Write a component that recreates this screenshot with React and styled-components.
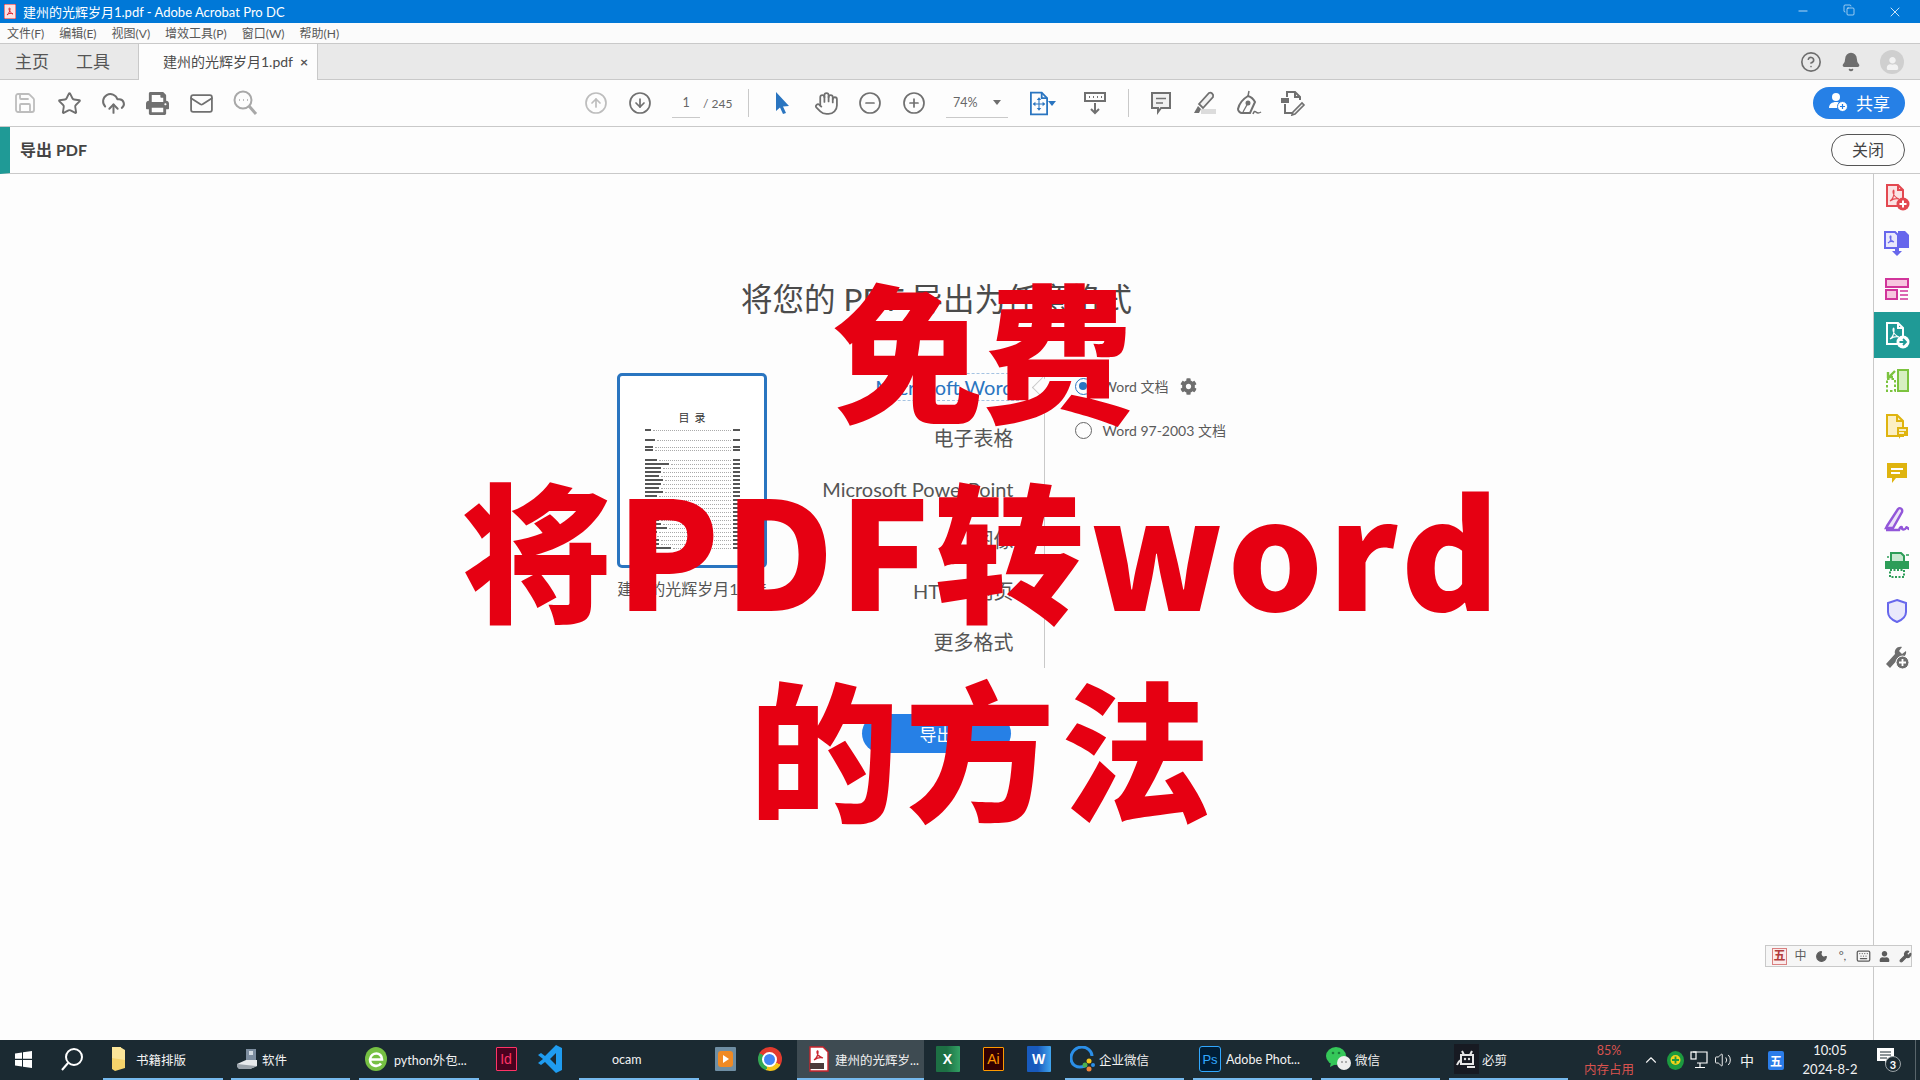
import React from "react";
import styled, { createGlobalStyle } from "styled-components";
import {
  Save, Star, CloudUpload, Mail, CircleArrowUp, CircleArrowDown, Hand,
  CircleMinus, CirclePlus, CircleHelp, Bell, ChevronUp, Volume2, Minus, X, Copy,
  Moon, Keyboard, Wrench,
} from "lucide-react";
import { FaCog, FaPrint, FaUser } from "react-icons/fa";

const UI_FONT = `Lato, "Noto Sans CJK SC", sans-serif`;

const GlobalStyle = createGlobalStyle`
  html, body { margin: 0; padding: 0; background: #fdfdfd; }
  body { font-family: ${UI_FONT}; overflow: hidden; }
  * { box-sizing: border-box; }
`;

const Page = styled.div`
  position: relative;
  display: flex;
  flex-direction: column;
  width: 1920px;
  height: 1080px;
  overflow: hidden;
  background: #fdfdfd;
  color: #4b4b4b;
`;

/* window chrome */
const TitleBar = styled.div`
  display: flex;
  align-items: center;
  height: 23px;
  padding-left: 4px;
  background: #0078d7;
  color: #fff;
  font-size: 13px;
`;
const TitleText = styled.span`
  margin-left: 7px;
  white-space: nowrap;
`;
const WindowControls = styled.div`
  display: flex;
  margin-left: auto;
  padding-right: 2px;
  color: #fff;
`;
const WindowButton = styled.span`
  display: flex;
  justify-content: center;
  width: 46px;
`;
const MenuBar = styled.div`
  display: flex;
  align-items: center;
  gap: 15px;
  height: 21px;
  padding: 0 0 2px 7px;
  border-bottom: 1px solid #c9c9c9;
  background: #fbfbfb;
  color: #585858;
  font-size: 12px;
  white-space: nowrap;
`;
const TabBar = styled.div`
  display: flex;
  align-items: stretch;
  height: 36px;
  border-bottom: 1px solid #c9c9c9;
  background: #e9e9e9;
`;
const NavTab = styled.span`
  display: flex;
  align-items: center;
  margin-left: ${(p) => p.$ml}px;
  padding-bottom: 2px;
  color: #555;
  font-size: 17px;
`;
const DocTab = styled.div`
  display: flex;
  align-items: center;
  width: 180px;
  height: 36px;
  margin-left: 28px;
  padding: 0 0 2px 24px;
  border: 1px solid #c9c9c9;
  border-width: 0 1px;
  background: #fdfdfd;
  color: #4b4b4b;
  font-size: 14px;
  white-space: nowrap;
`;
const TabClose = styled.span`
  margin-left: 7px;
  font-size: 14px;
  font-weight: 700;
  color: #555;
`;
const TabActions = styled.div`
  display: flex;
  align-items: center;
  gap: 19px;
  margin-left: auto;
  padding-right: 16px;
  color: #6e6e6e;
`;
const Avatar = styled.span`
  display: flex;
  align-items: flex-end;
  justify-content: center;
  width: 24px;
  height: 24px;
  padding-bottom: 4px;
  border-radius: 50%;
  background: #cfcfcf;
  color: #f2f2f2;
`;

/* main toolbar */
const Toolbar = styled.div`
  display: flex;
  align-items: center;
  height: 47px;
  padding-left: 3px;
  padding-right: 15px;
  border-bottom: 1px solid #c9c9c9;
  background: #fdfdfd;
`;
const ToolButton = styled.span`
  display: flex;
  align-items: center;
  justify-content: center;
  flex: none;
  width: 44px;
  height: 46px;
  margin-left: ${(p) => p.$ml || 0}px;
  color: ${(p) => p.$color || "#707070"};
`;
const ToolField = styled.span`
  display: flex;
  align-items: center;
  justify-content: ${(p) => (p.$spread ? "space-between" : "center")};
  flex: none;
  width: ${(p) => p.$w}px;
  height: 29px;
  margin-left: ${(p) => p.$ml}px;
  padding: 0 ${(p) => (p.$spread ? "7px" : "0")};
  border-bottom: 1px solid #c9c9c9;
  color: #666;
  font-size: 12.5px;
`;
const PageTotal = styled.span`
  flex: none;
  margin-left: 3px;
  width: 27px;
  color: #666;
  font-size: 12px;
  white-space: nowrap;
`;
const ToolDivider = styled.span`
  flex: none;
  width: 1px;
  height: 28px;
  margin-left: ${(p) => p.$ml}px;
  background: #c9c9c9;
`;
const Caret = styled.span`
  width: 0;
  height: 0;
  border: 4px solid transparent;
  border-top: 5px solid ${(p) => p.$color || "#6e6e6e"};
  border-bottom: 0;
`;
const ShareButton = styled.button`
  display: flex;
  align-items: center;
  justify-content: center;
  gap: 8px;
  width: 92px;
  height: 32px;
  margin-left: auto;
  padding: 0 0 2px;
  border: 0;
  border-radius: 16px;
  background: #2680e6;
  color: #fff;
  font-family: inherit;
  font-size: 17px;
`;

/* export header */
const ExportBar = styled.div`
  display: flex;
  align-items: center;
  height: 47px;
  padding-right: 15px;
  border-bottom: 1px solid #c9c9c9;
  border-left: 10px solid #1f9a96;
`;
const ExportTitle = styled.span`
  margin: 0 0 2px 10px;
  color: #444;
  font-size: 16px;
  font-weight: 700;
`;
const CloseButton = styled.button`
  width: 74px;
  height: 32px;
  margin-left: auto;
  padding: 0 0 2px;
  border: 1px solid #555;
  border-radius: 16px;
  background: #fdfdfd;
  color: #444;
  font-family: inherit;
  font-size: 16px;
`;

/* body */
const Body = styled.div`
  display: flex;
  flex: 1;
  min-height: 0;
`;
const Main = styled.main`
  display: flex;
  flex-direction: column;
  align-items: center;
  flex: 1;
  padding-top: 104px;
`;
const Heading = styled.h1`
  margin: 0;
  height: 42px;
  color: #4b4b4b;
  font-size: 31.5px;
  font-weight: 400;
  line-height: 42px;
  white-space: nowrap;
`;
const Exporter = styled.div`
  display: flex;
  width: 640px;
  margin-top: 42px;
`;
const ThumbColumn = styled.div`
  display: flex;
  flex-direction: column;
  align-items: center;
  flex: none;
  width: 150px;
  padding-top: 11px;
`;
const Thumb = styled.div`
  display: flex;
  flex-direction: column;
  align-items: stretch;
  width: 150px;
  height: 195px;
  padding: 34px 24px 0 25px;
  border: 3px solid #2a75c0;
  border-radius: 5px;
  background: #fff;
`;
const ThumbTitle = styled.div`
  margin-bottom: 3px;
  color: #333;
  font-size: 11px;
  line-height: 15px;
  text-align: center;
  word-spacing: 2px;
`;
const TocRow = styled.div`
  display: flex;
  align-items: center;
  gap: 2px;
  height: 2px;
  margin-top: ${(p) => p.$gap}px;
`;
const TocLabel = styled.span`
  flex: none;
  width: ${(p) => p.$w}px;
  height: 2px;
  background: #555;
`;
const TocDots = styled.span`
  flex: 1;
  border-bottom: 1px dotted #aaa;
`;
const ThumbCaption = styled.div`
  margin-top: 9px;
  color: #555;
  font-size: 16px;
  line-height: 24px;
  white-space: nowrap;
`;
const FormatList = styled.div`
  flex: none;
  width: 277px;
  padding-right: 30px;
`;
const FormatRow = styled.div`
  position: relative;
  display: flex;
  align-items: center;
  justify-content: flex-end;
  height: 51px;
  padding-bottom: 2px;
  color: ${(p) => (p.$active ? "#2a75c0" : "#555")};
  font-size: 20px;
  white-space: nowrap;
  ${(p) =>
    p.$active &&
    `
    &::after {
      content: "";
      position: absolute;
      right: -36px;
      top: 18px;
      width: 14px;
      height: 14px;
      transform: rotate(45deg);
      border-left: 1px solid #c9c9c9;
      border-bottom: 1px solid #c9c9c9;
      background: #fdfdfd;
    }
  `}
`;
const ActiveLabel = styled.span`
  padding: 0 5px 0 2px;
  margin-right: -5px;
  line-height: 26px;
  border-top: 1px dashed #a5c3e2;
  border-bottom: 1px dashed #a5c3e2;
`;
const OptionsColumn = styled.div`
  flex: 1;
  padding: 12px 0 0 30px;
  border-left: 1px solid #c9c9c9;
`;
const Option = styled.label`
  display: flex;
  align-items: center;
  height: 24px;
  margin-bottom: 20px;
  color: #5a5a5a;
  font-size: 14px;
  white-space: nowrap;
`;
const Radio = styled.span`
  display: flex;
  align-items: center;
  justify-content: center;
  flex: none;
  width: 17px;
  height: 17px;
  margin-right: 11px;
  border: 1.5px solid ${(p) => (p.$checked ? "#2a75c0" : "#666")};
  border-radius: 50%;
  background: #fdfdfd;
  &::after {
    content: "";
    display: ${(p) => (p.$checked ? "block" : "none")};
    width: 8px;
    height: 8px;
    border-radius: 50%;
    background: #2a75c0;
  }
`;
const GearWrap = styled.span`
  display: flex;
  margin-left: 12px;
  color: #6e6e6e;
`;
const ExportButton = styled.button`
  width: 149px;
  height: 39px;
  margin-top: 46px;
  border: 0;
  border-radius: 20px;
  background: #2680e6;
  color: #fff;
  font-family: inherit;
  font-size: 17px;
`;

/* right rail */
const Rail = styled.aside`
  flex: none;
  width: 47px;
  border-left: 1px solid #c9c9c9;
`;
const RailItem = styled.div`
  display: flex;
  align-items: center;
  justify-content: center;
  height: 46px;
  background: ${(p) => (p.$active ? "#1f9a96" : "transparent")};
`;

/* banner lying over the page */
const Banner = styled.div`
  position: absolute;
  top: 247px;
  left: 0;
  width: 1966px;
  color: #e60012;
  font-family: "Noto Sans CJK SC", "Noto Sans", sans-serif;
  font-size: 150px;
  font-weight: 900;
  text-align: center;
  pointer-events: none;
`;
const BannerLine = styled.div`
  height: 199px;
  line-height: 199px;
  letter-spacing: ${(p) => p.$spacing}px;
  white-space: nowrap;
`;

/* IME floating bar */
const ImeBar = styled.div`
  position: absolute;
  top: 945px;
  left: 1765px;
  display: flex;
  align-items: center;
  gap: 6px;
  width: 147px;
  height: 22px;
  padding-left: 6px;
  border: 1px solid #c9c9c9;
  background: #f6f6f6;
  color: #5c5c5c;
  font-size: 13px;
`;
const ImeGlyph = styled.span`
  display: flex;
  align-items: center;
  justify-content: center;
  flex: none;
  width: 15px;
  height: 17px;
  color: ${(p) => p.$color || "#5c5c5c"};
  font-size: 12px;
  font-weight: ${(p) => p.$weight || 400};
  line-height: 1;
  border: ${(p) => (p.$boxed ? "1px solid #d98080" : "0")};
  background: ${(p) => (p.$boxed ? "#fbeaea" : "transparent")};
`;

/* taskbar */
const Taskbar = styled.footer`
  display: flex;
  align-items: center;
  flex: none;
  height: 40px;
  background: #1b2a32;
  color: #f2f2f2;
  font-size: 12.5px;
`;
const TaskItem = styled.div`
  position: relative;
  display: flex;
  align-items: center;
  justify-content: ${(p) => (p.$center ? "center" : "flex-start")};
  gap: ${(p) => p.$gap || 6}px;
  flex: none;
  width: ${(p) => p.$w}px;
  height: 40px;
  margin-left: ${(p) => p.$ml || 0}px;
  padding-left: ${(p) => (p.$center ? 0 : p.$pl || 5)}px;
  padding-bottom: 2px;
  background: ${(p) => (p.$active ? "#3e4b52" : "transparent")};
  white-space: nowrap;
  ${(p) =>
    p.$open &&
    `
    &::after {
      content: "";
      position: absolute;
      left: 0;
      right: 0;
      bottom: 0;
      height: 2px;
      background: #76b9ed;
    }
  `}
`;
const AppTile = styled.span`
  display: flex;
  align-items: center;
  justify-content: center;
  flex: none;
  width: ${(p) => p.$w || 21}px;
  height: ${(p) => p.$h || 24}px;
  border: ${(p) => (p.$line ? `1px solid ${p.$line}` : "0")};
  border-radius: ${(p) => p.$r || 1}px;
  background: ${(p) => p.$bg};
  color: ${(p) => p.$fg};
  font-family: "Liberation Sans", "Noto Sans CJK SC", sans-serif;
  font-size: ${(p) => p.$size || 14}px;
  font-weight: ${(p) => p.$weight || 400};
`;
const ChromeBall = styled.span`
  display: flex;
  align-items: center;
  justify-content: center;
  width: 24px;
  height: 24px;
  border-radius: 50%;
  background: conic-gradient(#e33b2e 0 120deg, #f5c518 120deg 200deg, #34a853 200deg 300deg, #e33b2e 300deg);
  &::after {
    content: "";
    width: 11px;
    height: 11px;
    border: 2px solid #fff;
    border-radius: 50%;
    background: #4285f4;
  }
`;
const MemoryMeter = styled.div`
  flex: none;
  width: 60px;
  margin-left: 11px;
  color: #d9534f;
  font-size: 12.5px;
  line-height: 19px;
  text-align: center;
`;
const Tray = styled.span`
  display: flex;
  align-items: center;
  justify-content: center;
  flex: none;
  width: ${(p) => p.$w || 24}px;
  height: 40px;
  color: #f2f2f2;
  font-size: 14px;
`;
const Clock = styled.div`
  flex: none;
  width: 70px;
  margin-left: 2px;
  font-size: 13px;
  line-height: 19px;
  text-align: center;
`;
const NoticeBadge = styled.span`
  position: absolute;
  right: 0;
  bottom: -6px;
  display: flex;
  align-items: center;
  justify-content: center;
  width: 16px;
  height: 16px;
  border: 1px solid #9aa2a6;
  border-radius: 50%;
  background: #1b2a32;
  color: #fff;
  font-size: 11px;
  font-weight: 700;
`;
const Notice = styled.span`
  position: relative;
  display: flex;
  flex: none;
  width: 24px;
  margin-left: 12px;
  margin-top: -6px;
`;
const DesktopEdge = styled.span`
  flex: none;
  width: 1px;
  height: 40px;
  margin-left: auto;
  margin-right: 4px;
  background: #59656b;
`;

/* drawn icons */
const LensIcon = () => (
  <svg width="26" height="26" viewBox="0 0 26 26" fill="none" stroke="#a8a8a8" strokeWidth="2">
    <circle cx="11" cy="10" r="8.500" />
    <path d="M17 16l7 8" strokeWidth="3" />
    <path d="M7 10h1M11 10h1M15 10h1" strokeWidth="1.500" />
  </svg>
);
const CursorIcon = () => (
  <svg width="18" height="24" viewBox="0 0 18 24"><path d="M3 1l13 14-6 .6 3 6.400-3 1-3-6.500L3 20z" fill="#2a75c0" /></svg>
);
const FitIcon = () => (
  <svg width="18" height="25" viewBox="0 0 20 26" fill="none" stroke="#2a75c0" strokeWidth="2">
    <path d="M1 1h12l6 6v18H1z" /><path d="M13 1v6h6" />
    <path d="M10 8v11M4 13.500h12" strokeWidth="1.200" />
    <path d="M10 6l-2.500 3h5zM10 21l-2.500-3h5zM3 13.500l3-2.500v5zM17 13.500l-3-2.500v5z" fill="#2a75c0" stroke="none" />
  </svg>
);
const RulerIcon = () => (
  <svg width="24" height="24" viewBox="0 0 24 24" fill="none" stroke="#707070" strokeWidth="2">
    <rect x="2" y="2" width="20" height="8" />
    <path d="M6 6h1M10 6h1M14 6h1M18 6h1M12 12v10M8 18l4 4 4-4" />
  </svg>
);
const CommentIcon = () => (
  <svg width="22" height="24" viewBox="0 0 22 24" fill="none" stroke="#707070" strokeWidth="2">
    <path d="M2 2h18v15H11l-3 4v-4H2z" fill="#f0f0f0" /><path d="M6 7.500h10M6 12h7" strokeWidth="1.300" />
  </svg>
);
const HighlightIcon = () => (
  <svg width="24" height="24" viewBox="0 0 24 24" fill="none">
    <rect x="8" y="18" width="15" height="5" fill="#dcdcdc" />
    <path d="M6 13L16 2c2-1 5 1 4 4L10 17z" stroke="#707070" strokeWidth="1.800" fill="#f2f2f2" />
    <path d="M5 15l3 3-2 4H1z" fill="#707070" />
  </svg>
);
const SignIcon = () => (
  <svg width="26" height="27" viewBox="0 0 26 27" fill="none" stroke="#707070" strokeWidth="2">
    <path d="M13 1l-1 5" strokeWidth="1.500" />
    <path d="M12 6c4 1 6 4 7 6l-5 11H6C4 23 2 21 2 19c1-5 5-10 10-13z" />
    <path d="M12 13l-5 9" strokeWidth="1.300" />
    <circle cx="12" cy="13" r="1.500" fill="#707070" />
    <path d="M17 24c1-3 2-3 3-2s2 2 5 0" strokeWidth="1.500" />
  </svg>
);
const EditPageIcon = () => (
  <svg width="26" height="26" viewBox="0 0 26 26" fill="none" stroke="#707070" strokeWidth="2">
    <path d="M7 7V2h8l5 5v3" /><path d="M15 2v5h5" /><path d="M5 14v9h7" />
    <rect x="1" y="8" width="8" height="5" fill="#707070" stroke="none" />
    <path d="M13 22l9-9 2 2-9 9-3 1z" fill="#f0f0f0" strokeWidth="1.600" />
  </svg>
);
const ShareUserIcon = () => (
  <svg width="20" height="20" viewBox="0 0 20 20">
    <circle cx="8" cy="5" r="4" fill="#fff" /><path d="M1 16c0-4 3-6 7-6s5 2 5 6z" fill="#fff" />
    <circle cx="14.500" cy="14.500" r="5" fill="#fff" stroke="#2680e6" />
    <path d="M14.500 12v5M12 14.500h5" stroke="#2680e6" strokeWidth="1.200" />
  </svg>
);
const PdfMark = ({ color }) => (
  <path d="M6 18c3-2 4-6 4-9 0-3-1-2-1 0 0 3 3 6 6 7-3-1-6 0-9 2z" fill="none" stroke={color} strokeWidth="1.100" />
);
const PdfPage = ({ color, fill }) => (
  <>
    <path d="M3 2h11l5 5v16H3z" fill={fill} stroke={color} strokeWidth="2" />
    <path d="M14 2v5h5" fill="none" stroke={color} strokeWidth="2" />
    <PdfMark color={color} />
  </>
);
const railIcons = [
  <svg key="create" width="26" height="28" viewBox="0 0 26 28">
    <PdfPage color="#e34850" fill="#fbe3e4" /><circle cx="19" cy="21" r="6.500" fill="#e34850" />
    <path d="M19 17.500v7M15.500 21h7" stroke="#fff" strokeWidth="2" />
  </svg>,
  <svg key="combine" width="26" height="28" viewBox="0 0 26 28">
    <path d="M1 3h10l3 3v13H1z" fill="#e9e8fb" stroke="#6767ec" strokeWidth="2" />
    <path d="M14 2h7l4 4v13H14z" fill="#6767ec" />
    <path d="M11 18v4H8l5 5 5-5h-3v-4z" fill="#6767ec" />
    <path d="M4 14c2-1 3-4 3-6 0-2-1-1-1 0 0 2 2 4 4 5-2-1-4-1-6 1z" fill="none" stroke="#6767ec" strokeWidth="1.100" />
  </svg>,
  <svg key="organize" width="24" height="24" viewBox="0 0 24 24" fill="#f7c6df" stroke="#d1359b" strokeWidth="2">
    <rect x="1" y="2" width="22" height="8" /><rect x="1" y="13" width="11" height="9" />
    <path d="M15 14h8M15 18h8M15 22h8" strokeWidth="1.300" />
  </svg>,
  <svg key="export" width="26" height="28" viewBox="0 0 26 28">
    <path d="M3 2h11l5 5v16H3z" fill="none" stroke="#fff" strokeWidth="2" />
    <path d="M14 2v5h5" fill="none" stroke="#fff" strokeWidth="2" /><PdfMark color="#fff" />
    <circle cx="19" cy="21" r="6.500" fill="#fff" />
    <path d="M15.500 21h6M19 18l3 3-3 3" fill="none" stroke="#1f9a96" strokeWidth="1.800" />
  </svg>,
  <svg key="compress" width="24" height="24" viewBox="0 0 24 24" fill="none" stroke="#7cc33f" strokeWidth="2">
    <rect x="13" y="1" width="10" height="21" fill="#d8efc2" />
    <path d="M2 10h8v12H2z" strokeDasharray="2.500 2" />
    <path d="M10 2L5 7M3 3v5h5" strokeWidth="2.400" />
  </svg>,
  <svg key="notes" width="24" height="28" viewBox="0 0 24 28">
    <path d="M2 2h10l6 6v15H2z" fill="#fcefc2" stroke="#dfb40f" strokeWidth="2" />
    <path d="M12 2v6h6" fill="none" stroke="#dfb40f" strokeWidth="2" />
    <path d="M12 14h11v9h-7l-2 3v-3h-2z" fill="#dfb40f" />
    <path d="M14 17h7M14 20h5" stroke="#fff" strokeWidth="1.300" />
  </svg>,
  <svg key="comment" width="24" height="24" viewBox="0 0 24 24">
    <path d="M2 2h20v15H11l-4 5v-5H2z" fill="#dfb40f" />
    <path d="M6 8h12M6 12h9" stroke="#fff" strokeWidth="2" />
  </svg>,
  <svg key="sign" width="26" height="26" viewBox="0 0 26 26" fill="none" stroke="#9256d9" strokeWidth="2.400">
    <path d="M3 20L14 3c2-2 5 0 4 3L9 22H2z" fill="#ece2f8" />
    <path d="M2 24h13c1-3 3-4 3-2s3 2 4 0 2 1 3 1" />
  </svg>,
  <svg key="scan" width="26" height="26" viewBox="0 0 26 26">
    <path d="M7 1h10l3 3v7H7z" fill="#c7e8d0" stroke="#2d9d58" strokeWidth="2" />
    <rect x="1" y="9" width="24" height="8" fill="#2d9d58" />
    <path d="M6 18h14v7H6z" fill="none" stroke="#2d9d58" strokeWidth="2" strokeDasharray="2 1.500" />
    <path d="M3 5h2M22 3h3" stroke="#2d9d58" strokeWidth="1.500" />
  </svg>,
  <svg key="protect" width="22" height="26" viewBox="0 0 22 26">
    <path d="M11 2l9 3v9c0 5-4 8-9 10-5-2-9-5-9-10V5z" fill="#e9e8fb" stroke="#6767ec" strokeWidth="2" />
  </svg>,
  <svg key="tools" width="26" height="26" viewBox="0 0 26 26">
    <path d="M2 20L11 10c-1-4 2-8 7-7l-3 4 3 3 4-3c1 4-3 8-7 7L6 24z" fill="#6e6e6e" />
    <circle cx="18.500" cy="18.500" r="6.500" fill="#6e6e6e" stroke="#fdfdfd" strokeWidth="1" />
    <path d="M18.500 15v7M15 18.500h7" stroke="#fff" strokeWidth="1.800" />
  </svg>,
];

const WindowsIcon = () => (
  <svg width="17" height="17" viewBox="0 0 17 17" fill="#fff"><path d="M0 2.500l7-1v6.300H0zM8 1.300L17 0v7.800H8zM0 9h7v6.500l-7-1zM8 9h9v8l-9-1.300z" /></svg>
);
const SearchIcon = () => (
  <svg width="24" height="24" viewBox="0 0 24 24" fill="none" stroke="#fff" strokeWidth="2"><circle cx="14" cy="10" r="8" /><path d="M8 16l-6 7" /></svg>
);
const FolderIcon = () => (
  <svg width="15" height="26" viewBox="0 0 15 26"><path d="M1 1h9v3h4v18l-10 3-3-2z" fill="#f5d36b" /><path d="M1 1h8l5 3v10L1 12z" fill="#fbe59a" /></svg>
);
const DriveIcon = () => (
  <svg width="22" height="24" viewBox="0 0 22 24"><path d="M10 2h10v13H10z" fill="#7d8ea0" /><path d="M13 4h4v4h-4z" fill="#d4dce3" /><path d="M1 17l9-4h11v6l-7 3H3z" fill="#e6e9ec" /><path d="M1 17v3l2 2h11l7-3" fill="#9aa3ab" /></svg>
);
const EdgeIcon = () => (
  <svg width="24" height="26" viewBox="0 0 24 26" fill="none">
    <ellipse cx="12" cy="13" rx="11" ry="12" fill="#76c043" />
    <path d="M6 13.500h12c0-8-11-8-12 0 0 7 8 8 11 4" stroke="#fff" strokeWidth="2.600" />
  </svg>
);
const VsCodeIcon = () => (
  <svg width="25" height="30" viewBox="0 0 25 30"><path d="M18 1l6 3v22l-6 3L7 18l-4 3-3-2 5-4-5-4 3-2 4 3z" fill="#1f9cf0" /><path d="M18 9l-6 6 6 6z" fill="#1b2a32" /></svg>
);
const MediaIcon = () => (
  <svg width="21" height="24" viewBox="0 0 21 24"><rect width="21" height="24" rx="1" fill="#6f8ea3" /><rect x="3" y="4" width="15" height="16" rx="3" fill="#f08a24" /><path d="M8 8l6 4-6 4z" fill="#fff" /></svg>
);
const PdfTaskIcon = () => (
  <svg width="20" height="26" viewBox="0 0 20 26"><path d="M1 1h13l5 5v19H1z" fill="#fff" stroke="#c9252d" strokeWidth="1.400" /><path d="M5 14c3-2 4-5 4-8 0-2-1-1-1 0 0 3 3 5 6 6-3-1-6 0-9 2z" fill="none" stroke="#c9252d" strokeWidth="1.300" /><rect x="1" y="17" width="14" height="6" fill="#4a3b3b" /></svg>
);
const WeComIcon = () => (
  <svg width="25" height="26" viewBox="0 0 25 26" fill="none"><path d="M15 20c-8 3-14-1-14-8S7 1 12 1s10 4 10 9" stroke="#2b8fe8" strokeWidth="3" /><circle cx="19" cy="15" r="2.500" fill="#f5c518" /><circle cx="15" cy="19" r="2.500" fill="#4caf50" /><circle cx="23" cy="19" r="2" fill="#2b8fe8" /><circle cx="19" cy="23" r="2.500" fill="#f0853b" /></svg>
);
const WeChatIcon = () => (
  <svg width="25" height="26" viewBox="0 0 25 26"><ellipse cx="10" cy="10" rx="10" ry="9" fill="#35c759" /><path d="M5 16l-1 5 6-3z" fill="#35c759" /><ellipse cx="18" cy="17" rx="7" ry="7" fill="#eee" /><circle cx="7" cy="7" r="1.300" fill="#1b7c3a" /><circle cx="13" cy="7" r="1.300" fill="#1b7c3a" /><circle cx="16" cy="16" r="1" fill="#999" /><circle cx="20" cy="16" r="1" fill="#999" /></svg>
);
const BijianIcon = () => (
  <svg width="25" height="30" viewBox="0 0 25 30" fill="none"><rect width="25" height="30" fill="#171a22" /><path d="M7 11h12v9H7zM10 11L8 7M16 11l2-4M3 21c1-3 2-4 4-5M13 23h8" stroke="#e6e6e6" strokeWidth="2" /><circle cx="11" cy="15" r="1.200" fill="#e6e6e6" /><circle cx="15" cy="15" r="1.200" fill="#e6e6e6" /></svg>
);
const GuardIcon = () => (
  <svg width="17" height="19" viewBox="0 0 17 19"><ellipse cx="8.500" cy="9.500" rx="8.500" ry="9.500" fill="#1c9a3f" /><circle cx="8.500" cy="9" r="5" fill="#f2d21b" /><path d="M8.500 5.500v7M5 9h7" stroke="#1c9a3f" strokeWidth="1.800" /></svg>
);
const NetworkIcon = () => (
  <svg width="18" height="18" viewBox="0 0 18 18" fill="none" stroke="#fff" strokeWidth="1.200"><path d="M3 1h14v11H7M10 12v4M5 16.500h10" /><rect x="1" y="1" width="5" height="7" /></svg>
);
const NoticeIcon = () => (
  <svg width="17" height="18" viewBox="0 0 17 18"><path d="M0 0h17v13h-6l-3 4v-4H0z" fill="#fff" /><path d="M3 4h11M3 7h11M3 10h7" stroke="#1b2a32" strokeWidth="1" /></svg>
);
const AcrobatBadge = () => (
  <svg width="12" height="15" viewBox="0 0 12 15"><rect width="12" height="15" rx="1" fill="#fbe3e4" stroke="#d9252d" /><path d="M3 11c2-2 3-4 3-6 0-2-1-1-1 0 0 2 2 4 4 5-2-1-4-1-6 1z" fill="none" stroke="#d9252d" /></svg>
);

const tocRows = [
  [6, 3], [10, 6, 4], [8, 3, 4], [8, 3], [12, 6, 4], [24, 2, 4], [16, 2], [16, 2], [14, 2], [18, 2],
  [16, 2], [14, 2], [18, 2], [12, 2], [16, 2], [18, 2], [14, 2], [12, 2], [16, 2], [14, 2], [16, 2],
  [22, 2], [12, 2], [10, 2], [14, 2], [14, 2], [26, 2],
];
const formats = ["电子表格", "Microsoft PowerPoint", "图像", "HTML 网页", "更多格式"];
const menus = ["文件(F)", "编辑(E)", "视图(V)", "增效工具(P)", "窗口(W)", "帮助(H)"];

const App = () => (
  <Page>
    <GlobalStyle />
    <TitleBar>
      <AcrobatBadge />
      <TitleText>建州的光辉岁月1.pdf - Adobe Acrobat Pro DC</TitleText>
      <WindowControls>
        <WindowButton><Minus size={14} strokeWidth={1.2} /></WindowButton>
        <WindowButton><Copy size={12} strokeWidth={1.2} /></WindowButton>
        <WindowButton><X size={16} strokeWidth={1.2} /></WindowButton>
      </WindowControls>
    </TitleBar>
    <MenuBar>
      {menus.map((m) => <span key={m}>{m}</span>)}
    </MenuBar>
    <TabBar>
      <NavTab $ml={15}>主页</NavTab>
      <NavTab $ml={27}>工具</NavTab>
      <DocTab>建州的光辉岁月1.pdf<TabClose>×</TabClose></DocTab>
      <TabActions>
        <CircleHelp size={22} strokeWidth={1.8} />
        <Bell size={20} fill="#6e6e6e" />
        <Avatar><FaUser size={13} /></Avatar>
      </TabActions>
    </TabBar>
    <Toolbar>
      <ToolButton $color="#bdbdbd"><Save size={24} strokeWidth={1.8} /></ToolButton>
      <ToolButton><Star size={25} strokeWidth={1.8} /></ToolButton>
      <ToolButton><CloudUpload size={25} strokeWidth={1.9} /></ToolButton>
      <ToolButton><FaPrint size={23} /></ToolButton>
      <ToolButton><Mail size={25} strokeWidth={1.7} /></ToolButton>
      <ToolButton><LensIcon /></ToolButton>
      <ToolButton $ml={307} $color="#bdbdbd"><CircleArrowUp size={24} strokeWidth={1.7} /></ToolButton>
      <ToolButton><CircleArrowDown size={24} strokeWidth={1.7} /></ToolButton>
      <ToolField $w={28} $ml={10}>1</ToolField>
      <PageTotal>/ 245</PageTotal>
      <ToolDivider $ml={18} />
      <ToolButton $ml={11}><CursorIcon /></ToolButton>
      <ToolButton><Hand size={25} strokeWidth={1.7} /></ToolButton>
      <ToolButton><CircleMinus size={24} strokeWidth={1.7} /></ToolButton>
      <ToolButton><CirclePlus size={24} strokeWidth={1.7} /></ToolButton>
      <ToolField $w={62} $ml={10} $spread>74%<Caret /></ToolField>
      <ToolButton $ml={13}><FitIcon /><Caret $color="#2a75c0" /></ToolButton>
      <ToolButton $ml={8}><RulerIcon /></ToolButton>
      <ToolDivider $ml={11} />
      <ToolButton $ml={10}><CommentIcon /></ToolButton>
      <ToolButton><HighlightIcon /></ToolButton>
      <ToolButton><SignIcon /></ToolButton>
      <ToolButton><EditPageIcon /></ToolButton>
      <ShareButton><ShareUserIcon />共享</ShareButton>
    </Toolbar>
    <ExportBar>
      <ExportTitle>导出 PDF</ExportTitle>
      <CloseButton>关闭</CloseButton>
    </ExportBar>
    <Body>
      <Main>
        <Heading>将您的 PDF 导出为任意格式</Heading>
        <Exporter>
          <ThumbColumn>
            <Thumb>
              <ThumbTitle>目 录</ThumbTitle>
              {tocRows.map(([w, gap, extra], i) => (
                <TocRow key={i} $gap={gap === 2 ? 2 : gap + (extra || 0) - 2}>
                  <TocLabel $w={w} />
                  <TocDots />
                  <TocLabel $w={7} />
                </TocRow>
              ))}
            </Thumb>
            <ThumbCaption>建州的光辉岁月1.pdf</ThumbCaption>
          </ThumbColumn>
          <FormatList>
            <FormatRow $active><ActiveLabel>Microsoft Word</ActiveLabel></FormatRow>
            {formats.map((f) => <FormatRow key={f}>{f}</FormatRow>)}
          </FormatList>
          <OptionsColumn>
            <Option>
              <Radio $checked />Word 文档
              <GearWrap><FaCog size={17} /></GearWrap>
            </Option>
            <Option><Radio />Word 97-2003 文档</Option>
          </OptionsColumn>
        </Exporter>
        <ExportButton>导出</ExportButton>
      </Main>
      <Rail>
        {railIcons.map((icon, i) => <RailItem key={i} $active={i === 3}>{icon}</RailItem>)}
      </Rail>
    </Body>
    <Taskbar>
      <TaskItem $w={47} $center><WindowsIcon /></TaskItem>
      <TaskItem $w={50} $center><SearchIcon /></TaskItem>
      <TaskItem $w={120} $ml={6} $open $pl={8} $gap={10}><FolderIcon />书籍排版</TaskItem>
      <TaskItem $w={119} $ml={8} $open $gap={4}><DriveIcon />软件</TaskItem>
      <TaskItem $w={120} $ml={9} $open><EdgeIcon />python外包...</TaskItem>
      <TaskItem $w={44} $ml={5} $center><AppTile $bg="#49021f" $fg="#ff3366" $line="#ff3366">Id</AppTile></TaskItem>
      <TaskItem $w={44} $center><VsCodeIcon /></TaskItem>
      <TaskItem $w={120} $ml={7} $open $pl={33}>ocam</TaskItem>
      <TaskItem $w={44} $ml={4} $center><MediaIcon /></TaskItem>
      <TaskItem $w={45} $center><ChromeBall /></TaskItem>
      <TaskItem $w={127} $ml={5} $active $open $pl={12}><PdfTaskIcon />建州的光辉岁...</TaskItem>
      <TaskItem $w={47} $center><AppTile $w={24} $h={26} $bg="linear-gradient(90deg,#1d7044 45%,#33a265)" $fg="#fff" $weight={700}>X</AppTile></TaskItem>
      <TaskItem $w={45} $center><AppTile $bg="#330000" $fg="#ff9a00" $line="#ff9a00">Ai</AppTile></TaskItem>
      <TaskItem $w={45} $center><AppTile $w={24} $h={26} $bg="linear-gradient(90deg,#185abd 45%,#41a5ee)" $fg="#fff" $weight={700}>W</AppTile></TaskItem>
      <TaskItem $w={119} $ml={4} $open $gap={4}><WeComIcon />企业微信</TaskItem>
      <TaskItem $w={119} $ml={9} $open $pl={6} $gap={5}>
        <AppTile $w={22} $h={26} $r={3} $bg="#001e36" $fg="#31a8ff" $line="#31a8ff" $size={13}>Ps</AppTile>
        Adobe Phot...
      </TaskItem>
      <TaskItem $w={119} $ml={9} $open $gap={4}><WeChatIcon />微信</TaskItem>
      <TaskItem $w={119} $ml={9} $open $gap={3}><BijianIcon />必剪</TaskItem>
      <MemoryMeter>85%<br />内存占用</MemoryMeter>
      <Tray><ChevronUp size={18} strokeWidth={1.5} /></Tray>
      <Tray><GuardIcon /></Tray>
      <Tray><NetworkIcon /></Tray>
      <Tray><Volume2 size={18} strokeWidth={1.3} /></Tray>
      <Tray>中</Tray>
      <Tray $w={34}><AppTile $w={16} $h={19} $r={2} $bg="#2b7de9" $fg="#fff" $size={12} $weight={700}>五</AppTile></Tray>
      <Clock>10:05<br />2024-8-2</Clock>
      <Notice><NoticeIcon /><NoticeBadge>3</NoticeBadge></Notice>
      <DesktopEdge />
    </Taskbar>
    <ImeBar>
      <ImeGlyph $boxed $color="#b23b3b" $weight={700}>五</ImeGlyph>
      <ImeGlyph>中</ImeGlyph>
      <ImeGlyph><Moon size={13} fill="#5c5c5c" /></ImeGlyph>
      <ImeGlyph>°,</ImeGlyph>
      <ImeGlyph><Keyboard size={16} /></ImeGlyph>
      <ImeGlyph><FaUser size={11} /></ImeGlyph>
      <ImeGlyph><Wrench size={13} fill="#5c5c5c" /></ImeGlyph>
    </ImeBar>
    <Banner>
      <BannerLine $spacing={0}>免费</BannerLine>
      <BannerLine $spacing={5}>将PDF转word</BannerLine>
      <BannerLine $spacing={6}>的方法</BannerLine>
    </Banner>
  </Page>
);

export default App;
